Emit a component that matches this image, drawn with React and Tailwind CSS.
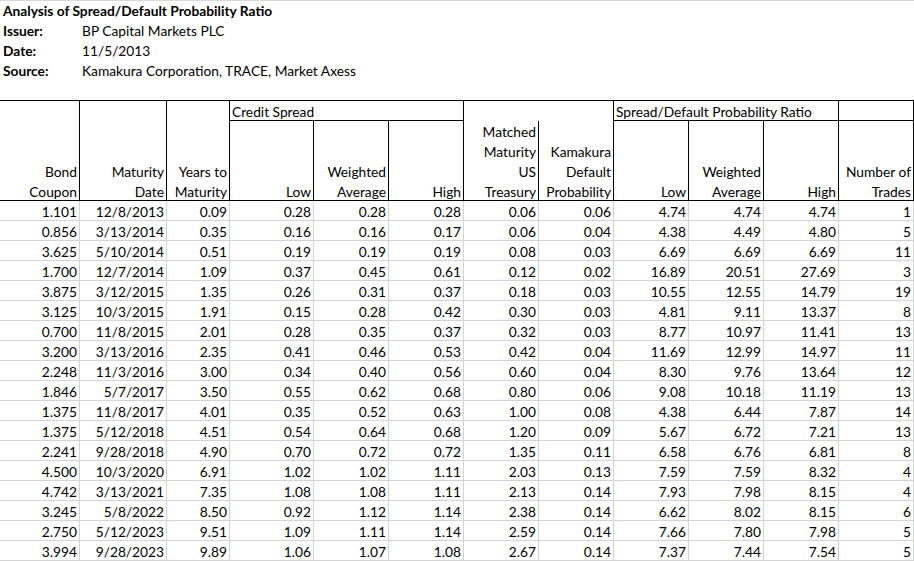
import React from "react";

const rows = [
  ["1.101", "12/8/2013", "0.09", "0.28", "0.28", "0.28", "0.06", "0.06", "4.74", "4.74", "4.74", "1"],
  ["0.856", "3/13/2014", "0.35", "0.16", "0.16", "0.17", "0.06", "0.04", "4.38", "4.49", "4.80", "5"],
  ["3.625", "5/10/2014", "0.51", "0.19", "0.19", "0.19", "0.08", "0.03", "6.69", "6.69", "6.69", "11"],
  ["1.700", "12/7/2014", "1.09", "0.37", "0.45", "0.61", "0.12", "0.02", "16.89", "20.51", "27.69", "3"],
  ["3.875", "3/12/2015", "1.35", "0.26", "0.31", "0.37", "0.18", "0.03", "10.55", "12.55", "14.79", "19"],
  ["3.125", "10/3/2015", "1.91", "0.15", "0.28", "0.42", "0.30", "0.03", "4.81", "9.11", "13.37", "8"],
  ["0.700", "11/8/2015", "2.01", "0.28", "0.35", "0.37", "0.32", "0.03", "8.77", "10.97", "11.41", "13"],
  ["3.200", "3/13/2016", "2.35", "0.41", "0.46", "0.53", "0.42", "0.04", "11.69", "12.99", "14.97", "11"],
  ["2.248", "11/3/2016", "3.00", "0.34", "0.40", "0.56", "0.60", "0.04", "8.30", "9.76", "13.64", "12"],
  ["1.846", "5/7/2017", "3.50", "0.55", "0.62", "0.68", "0.80", "0.06", "9.08", "10.18", "11.19", "13"],
  ["1.375", "11/8/2017", "4.01", "0.35", "0.52", "0.63", "1.00", "0.08", "4.38", "6.44", "7.87", "14"],
  ["1.375", "5/12/2018", "4.51", "0.54", "0.64", "0.68", "1.20", "0.09", "5.67", "6.72", "7.21", "13"],
  ["2.241", "9/28/2018", "4.90", "0.70", "0.72", "0.72", "1.35", "0.11", "6.58", "6.76", "6.81", "8"],
  ["4.500", "10/3/2020", "6.91", "1.02", "1.02", "1.11", "2.03", "0.13", "7.59", "7.59", "8.32", "4"],
  ["4.742", "3/13/2021", "7.35", "1.08", "1.08", "1.11", "2.13", "0.14", "7.93", "7.98", "8.15", "4"],
  ["3.245", "5/8/2022", "8.50", "0.92", "1.12", "1.14", "2.38", "0.14", "6.62", "8.02", "8.15", "6"],
  ["2.750", "5/12/2023", "9.51", "1.09", "1.11", "1.14", "2.59", "0.14", "7.66", "7.80", "7.98", "5"],
  ["3.994", "9/28/2023", "9.89", "1.06", "1.07", "1.08", "2.67", "0.14", "7.37", "7.44", "7.54", "5"],
];

const info = [
  ["Issuer:", "BP Capital Markets PLC"],
  ["Date:", "11/5/2013"],
  ["Source:", "Kamakura Corporation, TRACE, Market Axess"],
];

const cols =
  "grid grid-cols-[80px_87px_63px_84px_75px_75px_75px_75px_75px_75px_75px_75px]";

// header cell: text sits on the bottom, right aligned, one line per 20px
const HeadCell = ({ lines, className = "" }) => (
  <div
    className={`border-r border-b border-black flex flex-col justify-end items-end pr-[2px] ${className}`}
  >
    <div className="-mb-[2px] text-right leading-[20px]">
      {lines.map((l) => (
        <div key={l} className="whitespace-nowrap">
          {l}
        </div>
      ))}
    </div>
  </div>
);

const GroupCell = ({ label, className = "" }) => (
  <div
    className={`border-r border-black pl-[2px] pt-[3px] leading-[16px] whitespace-nowrap ${className}`}
  >
    {label}
  </div>
);

export default function App() {
  return (
    <div className="w-[914px] h-[561px] bg-white text-black overflow-hidden font-['Lato','Liberation_Sans',sans-serif] text-[13.75px]">
      <div className="h-[100px] border-t border-[#d9d9d9]">
        <div className="h-5 pl-[3px] pt-[2px] leading-[16px] font-bold">
          Analysis of Spread/Default Probability Ratio
        </div>
        {info.map(([label, value]) => (
          <div key={label} className="flex h-5 pt-[2px] leading-[16px]">
            <div className="w-[80px] pl-[3px] font-bold">{label}</div>
            <div className="pl-[2px] whitespace-nowrap">{value}</div>
          </div>
        ))}
      </div>

      <div className={`${cols} grid-rows-[20px_80px] border-t border-black`}>
        <HeadCell lines={["Bond", "Coupon"]} className="row-span-2" />
        <HeadCell lines={["Maturity", "Date"]} className="row-span-2" />
        <HeadCell lines={["Years to", "Maturity"]} className="row-span-2" />
        <GroupCell label="Credit Spread" className="col-span-3 border-b" />
        <GroupCell label="" className="col-span-2" />
        <GroupCell label="Spread/Default Probability Ratio" className="col-span-3 border-b" />
        <GroupCell label="" className="border-b" />

        <HeadCell lines={["Low"]} />
        <HeadCell lines={["Weighted", "Average"]} />
        <HeadCell lines={["High"]} />
        <HeadCell lines={["Matched", "Maturity", "US", "Treasury"]} />
        <HeadCell lines={["Kamakura", "Default", "Probability"]} />
        <HeadCell lines={["Low"]} />
        <HeadCell lines={["Weighted", "Average"]} />
        <HeadCell lines={["High"]} />
        <HeadCell lines={["Number of", "Trades"]} />
      </div>

      {rows.map((r, i) => (
        <div key={i} className={cols}>
          {r.map((v, j) => (
            <div
              key={j}
              className="h-5 border-r border-b border-[#d4d4d4] pr-[2px] pt-[3px] leading-[16px] text-right whitespace-nowrap"
            >
              {v}
            </div>
          ))}
        </div>
      ))}
    </div>
  );
}
